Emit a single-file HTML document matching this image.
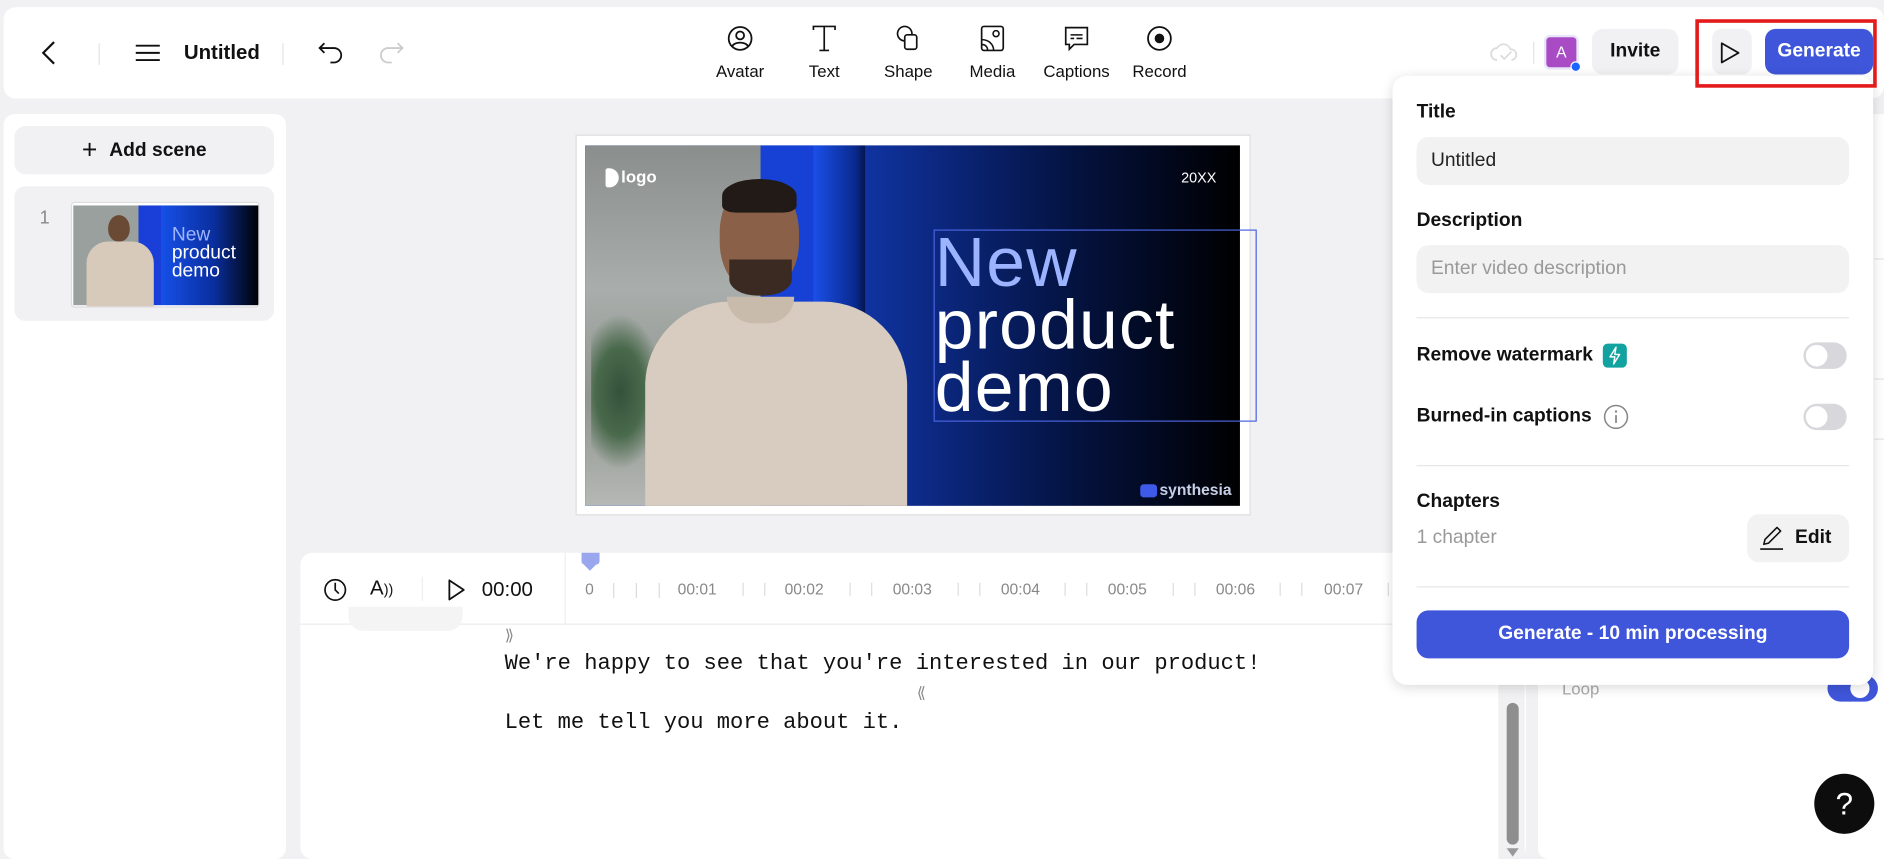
<!DOCTYPE html>
<html><head><meta charset="utf-8"><style>
*{box-sizing:border-box;margin:0;padding:0}
html,body{width:1884px;height:859px;overflow:hidden;background:#f1f1f3;font-family:"Liberation Sans",sans-serif;color:#111}
#s{position:absolute;left:0;top:0;width:1568px;height:715px;transform:scale(1.2015);transform-origin:0 0;background:#f1f1f3}
.a{position:absolute}
.tb{font-size:14px;color:#111;text-align:center}
svg{display:block}
</style></head><body><div id="s">
<!-- top bar -->
<div class="a" style="left:3px;top:6px;width:1565px;height:76px;background:#fff;border-radius:10px"></div>
<svg class="a" style="left:30px;top:32px" width="22" height="24" viewBox="0 0 22 24"><path d="M15 3 L6 12 L15 21" fill="none" stroke="#111" stroke-width="1.8"/></svg>
<div class="a" style="left:82px;top:36px;width:1px;height:18px;background:#e3e3e3"></div>
<svg class="a" style="left:112px;top:35px" width="22" height="18"><path d="M1 3H21M1 9H21M1 15H21" stroke="#111" stroke-width="1.6"/></svg>
<div class="a" style="left:153px;top:34px;font-size:17px;font-weight:bold">Untitled</div>
<div class="a" style="left:235px;top:36px;width:1px;height:18px;background:#e3e3e3"></div>
<svg class="a" style="left:264px;top:33px" width="24" height="22"><path d="M6 3 L2 7 L6 11 M2 7 H14 a6 6 0 0 1 0 12 H11" fill="none" stroke="#111" stroke-width="1.5"/></svg>
<svg class="a" style="left:313px;top:33px" width="24" height="22"><path d="M18 3 L22 7 L18 11 M22 7 H10 a6 6 0 0 0 0 12 H13" fill="none" stroke="#ccc" stroke-width="1.5"/></svg>
<!-- tools -->
<svg class="a" style="left:605px;top:21px" width="22" height="22"><circle cx="11" cy="11" r="9.5" fill="none" stroke="#111" stroke-width="1.5"/><circle cx="11" cy="8.5" r="3.3" fill="none" stroke="#111" stroke-width="1.5"/><path d="M4.5 17.5 C6 13.5 16 13.5 17.5 17.5" fill="none" stroke="#111" stroke-width="1.5"/></svg>
<div class="a tb" style="left:586px;top:51px;width:60px">Avatar</div>
<svg class="a" style="left:675px;top:20px" width="22" height="24"><path d="M2 5 V2 H20 V5 M11 2 V22 M7 22 H15" fill="none" stroke="#111" stroke-width="1.4"/></svg>
<div class="a tb" style="left:656px;top:51px;width:60px">Text</div>
<svg class="a" style="left:745px;top:20px" width="22" height="24"><circle cx="8" cy="8" r="6" fill="none" stroke="#111" stroke-width="1.4"/><rect x="8" y="9" width="10" height="12" rx="2" fill="#fff" stroke="#111" stroke-width="1.4"/></svg>
<div class="a tb" style="left:726px;top:51px;width:60px">Shape</div>
<svg class="a" style="left:815px;top:20px" width="22" height="24"><rect x="2" y="2" width="18" height="20" rx="2" fill="none" stroke="#111" stroke-width="1.4"/><circle cx="14" cy="8" r="2.5" fill="none" stroke="#111" stroke-width="1.3"/><path d="M2 13 C8 13 12 17 12 22 M2 17 C5 17 7 19 7 22" fill="none" stroke="#111" stroke-width="1.3"/></svg>
<div class="a tb" style="left:796px;top:51px;width:60px">Media</div>
<svg class="a" style="left:885px;top:21px" width="22" height="24"><path d="M2 2 H20 V16 H9 L5 20 V16 H2 Z" fill="none" stroke="#111" stroke-width="1.4"/><path d="M6 8 H16 M6 11 H9 M11 11 H16" stroke="#111" stroke-width="1.3"/></svg>
<div class="a tb" style="left:866px;top:51px;width:60px">Captions</div>
<svg class="a" style="left:954px;top:21px" width="22" height="22"><circle cx="11" cy="11" r="9.5" fill="none" stroke="#111" stroke-width="1.5"/><circle cx="11" cy="11" r="4" fill="#111"/></svg>
<div class="a tb" style="left:935px;top:51px;width:60px">Record</div>
<!-- right top -->
<svg class="a" style="left:1240px;top:34px" width="24" height="20"><path d="M6 16 a5 5 0 0 1 0-10 a6 6 0 0 1 11 1 a4.5 4.5 0 0 1 1 9" fill="none" stroke="#ddd" stroke-width="1.5"/><path d="M9 12 l3 3 l6-6" fill="none" stroke="#ddd" stroke-width="1.5"/></svg>
<div class="a" style="left:1276px;top:35px;width:1px;height:18px;background:#e3e3e3"></div>
<div class="a" style="left:1287px;top:31px;width:25px;height:25px;background:#a94bc4;border-radius:3px;color:#fff;font-size:13px;text-align:center;line-height:25px;box-shadow:0 0 0 2px #e9e6f9">A</div>
<div class="a" style="left:1307px;top:51px;width:9px;height:9px;background:#1966ff;border-radius:50%;border:1.5px solid #fff"></div>
<div class="a" style="left:1325px;top:24px;width:72px;height:38px;background:#f1f1f3;border-radius:9px;font-size:16px;font-weight:bold;text-align:center;line-height:38px">Invite</div>
<div class="a" style="left:1425px;top:24px;width:33px;height:38px;background:#f1f1f3;border-radius:8px"></div>
<svg class="a" style="left:1430px;top:34px" width="20" height="20"><path d="M3 2 L17 10 L3 18 Z" fill="none" stroke="#111" stroke-width="1.5" stroke-linejoin="round"/></svg>
<div class="a" style="left:1469px;top:24px;width:90px;height:38px;background:#3f56da;border-radius:9px;color:#fff;font-size:16px;font-weight:bold;text-align:center;line-height:38px">Generate</div>
<!-- left panel -->
<div class="a" style="left:3px;top:95px;width:235px;height:620px;background:#fff;border-radius:9px"></div>
<div class="a" style="left:12px;top:105px;width:216px;height:40px;background:#f1f1f3;border-radius:9px;font-size:16px;font-weight:bold;text-align:center;line-height:40px"><span style="font-weight:normal;font-size:22px;vertical-align:-2px;margin-right:10px">+</span>Add scene</div>
<div class="a" style="left:12px;top:155px;width:216px;height:112px;background:#f1f1f3;border-radius:9px"></div>
<div class="a" style="left:33px;top:173px;font-size:15px;color:#888">1</div>
<div class="a" style="left:59px;top:168px;width:157px;height:88px;background:#fff;border:1px solid #ddd;border-radius:3px;overflow:hidden">
 <div class="a" style="left:1px;top:2px;width:155px;height:83px;background:linear-gradient(90deg,#9aa09e 0 35%,#1a3fd8 35% 47%,#1650e8 47%,#0a2fa0 75%,#000 100%)"></div>
 <div class="a" style="left:30px;top:10px;width:18px;height:22px;background:#6a4a35;border-radius:50% 50% 45% 45%"></div>
 <div class="a" style="left:12px;top:32px;width:56px;height:55px;background:#d8cabb;border-radius:18px 18px 0 0"></div>
 <div class="a" style="left:83px;top:19px;color:#fff;font-size:16px;line-height:15px"><span style="color:#9fb4ff">New</span><br>product<br>demo</div>
</div>
<!-- canvas -->
<div class="a" style="left:479px;top:112px;width:562px;height:317px;background:#fff;border:1px solid #ddd"></div>
<div class="a" style="left:487px;top:121px;width:545px;height:300px;overflow:hidden;background:linear-gradient(90deg,#1a4ee6 0%,#123bb8 35%,#04123f 75%,#000 100%)">
 <div class="a" style="left:0;top:0;width:147px;height:300px;background:linear-gradient(180deg,#8a8e8c,#a9aeac 40%,#8f958f 70%,#b5b8b4)"></div>
 <div class="a" style="left:5px;top:140px;width:60px;height:130px;background:radial-gradient(ellipse at 40% 50%,#34513a 0,#4a6a4c 40%,rgba(120,140,120,0) 70%)"></div>
 <div class="a" style="left:146px;top:0;width:44px;height:300px;background:#1741d4"></div>
 <div class="a" style="left:190px;top:0;width:43px;height:300px;background:linear-gradient(90deg,#1a4fe8,#0a2a90 80%,#05164f)"></div>
 <div class="a" style="left:112px;top:30px;width:66px;height:92px;background:#8b6048;border-radius:46% 46% 45% 45%"></div>
 <div class="a" style="left:114px;top:28px;width:62px;height:28px;background:#221a16;border-radius:50% 50% 20% 20%"></div>
 <div class="a" style="left:120px;top:95px;width:52px;height:30px;background:#3a2a22;border-radius:0 0 45% 45%"></div>
 <div class="a" style="left:50px;top:130px;width:218px;height:190px;background:#d7ccbf;border-radius:70px 70px 0 0"></div>
 <div class="a" style="left:118px;top:126px;width:56px;height:22px;background:#c8bbac;border-radius:0 0 30px 30px"></div>
 <div class="a" style="left:17px;top:19px;width:11px;height:16px;background:#fff;border-radius:2px 8px 8px 2px"></div>
 <div class="a" style="left:30px;top:18px;color:#fff;font-size:14px;font-weight:bold">logo</div>
 <div class="a" style="left:496px;top:20px;color:#fff;font-size:12px">20XX</div>
 <div class="a" style="left:291px;top:72px;color:#fff;font-size:58px;line-height:52px;letter-spacing:1px"><span style="color:#9cb4ff">New</span><br>product<br>demo</div>
 <div class="a" style="left:462px;top:282px;width:14px;height:11px;background:#3d5ae8;border-radius:3px"></div>
 <div class="a" style="left:478px;top:279px;color:#c8d0e8;font-size:13px;font-weight:bold">synthesia</div>
</div>
<div class="a" style="left:777px;top:191px;width:269px;height:160px;border:1px solid #4a62df"></div>
<!-- timeline -->
<div class="a" style="left:250px;top:460px;width:1020px;height:255px;background:#fff;border-radius:10px"></div>
<div class="a" style="left:250px;top:519px;width:1020px;height:1px;background:#ebebeb"></div>
<div class="a" style="left:470px;top:460px;width:1px;height:59px;background:#efefef"></div>
<svg class="a" style="left:269px;top:480px" width="20" height="22"><circle cx="10" cy="11" r="8.5" fill="none" stroke="#111" stroke-width="1.4"/><path d="M10 5 V11 L13 14" fill="none" stroke="#111" stroke-width="1.4"/></svg>
<div class="a" style="left:308px;top:480px;font-size:17px">A<span style="font-size:12px">))</span></div>
<div class="a" style="left:351px;top:480px;width:1px;height:20px;background:#eee"></div>
<svg class="a" style="left:372px;top:481px" width="16" height="20"><path d="M2 2 L14 10 L2 18 Z" fill="none" stroke="#111" stroke-width="1.5" stroke-linejoin="round"/></svg>
<div class="a" style="left:401px;top:481px;font-size:17px">00:00</div>
<div class="a" style="left:484px;top:460px;width:15px;height:10px;background:#9aa6ee;border-radius:0 0 3px 3px"></div>
<div class="a" style="left:484px;top:468px;width:0;height:0;border-left:7.5px solid transparent;border-right:7.5px solid transparent;border-top:7px solid #9aa6ee"></div>
<div class="a" style="left:487px;top:483px;font-size:13px;color:#888;white-space:nowrap;word-spacing:0">
<span style="display:inline-block;width:22px">0</span><span style="color:#ddd;display:inline-block;width:19px">|</span><span style="color:#ddd;display:inline-block;width:19px">|</span><span style="color:#ddd;display:inline-block;width:18px">|</span>
</div>
<div class="a" style="left:564px;top:483px;font-size:13px;color:#888;white-space:nowrap">00:01</div>
<div class="a" style="left:653px;top:483px;font-size:13px;color:#888">00:02</div>
<div class="a" style="left:743px;top:483px;font-size:13px;color:#888">00:03</div>
<div class="a" style="left:833px;top:483px;font-size:13px;color:#888">00:04</div>
<div class="a" style="left:922px;top:483px;font-size:13px;color:#888">00:05</div>
<div class="a" style="left:1012px;top:483px;font-size:13px;color:#888">00:06</div>
<div class="a" style="left:1102px;top:483px;font-size:13px;color:#888">00:07</div>
<div class="a" style="left:618px;top:485px;width:1px;height:11px;background:#ddd;box-shadow:18px 0 #ddd,89px 0 #ddd,107px 0 #ddd,179px 0 #ddd,197px 0 #ddd,268px 0 #ddd,286px 0 #ddd,358px 0 #ddd,376px 0 #ddd,447px 0 #ddd,465px 0 #ddd,537px 0 #ddd"></div>
<div class="a" style="left:290px;top:505px;width:95px;height:20px;background:#f4f4f4;border-radius:0 0 12px 12px"></div>
<div class="a" style="left:420px;top:522px;font-family:'Liberation Mono',monospace;font-size:13px;color:#888">&#10219;</div>
<div class="a" style="left:420px;top:542px;font-family:'Liberation Mono',monospace;font-size:18.4px;color:#111;white-space:pre">We're happy to see that you're interested in our product!</div>
<div class="a" style="left:763px;top:570px;font-family:'Liberation Mono',monospace;font-size:13px;color:#888">&#10218;</div>
<div class="a" style="left:420px;top:591px;font-family:'Liberation Mono',monospace;font-size:18.4px;color:#111;white-space:pre">Let me tell you more about it.</div>
<div class="a" style="left:1247px;top:520px;width:22px;height:195px;background:#f1f1f3"></div>
<div class="a" style="left:1254px;top:585px;width:10px;height:118px;background:#8e8e8e;border-radius:5px"></div>
<div class="a" style="left:1254px;top:706px;width:0;height:0;border-left:5px solid transparent;border-right:5px solid transparent;border-top:7px solid #999"></div>
<!-- right panel -->
<div class="a" style="left:1280px;top:95px;width:288px;height:620px;background:#fff;border-radius:9px 0 0 9px"></div>
<div class="a" style="left:1560px;top:215px;width:8px;height:1px;background:#e5e5e5;box-shadow:0 100px #e5e5e5,0 150px #e5e5e5"></div>
<div class="a" style="left:1300px;top:565px;font-size:14px;color:#aaa">Loop</div>
<div class="a" style="left:1521px;top:562px;width:42px;height:22px;background:#3f56da;border-radius:11px"></div>
<div class="a" style="left:1540px;top:565px;width:16px;height:16px;background:#fff;border-radius:50%"></div>
<div class="a" style="left:1510px;top:644px;width:50px;height:50px;background:#0d0d0d;border-radius:50%;color:#fff;font-size:26px;text-align:center;line-height:50px">?</div>
<!-- popup -->
<div class="a" style="left:1159px;top:63px;width:400px;height:507px;background:#fff;border-radius:12px;box-shadow:0 2px 10px rgba(0,0,0,0.15)"></div>
<div class="a" style="left:1179px;top:85px;font-size:16px;font-weight:bold">Title</div>
<div class="a" style="left:1179px;top:114px;width:360px;height:40px;background:#f2f2f2;border-radius:10px;font-size:16px;line-height:40px;padding-left:12px;color:#222">Untitled</div>
<div class="a" style="left:1179px;top:175px;font-size:16px;font-weight:bold">Description</div>
<div class="a" style="left:1179px;top:204px;width:360px;height:40px;background:#f2f2f2;border-radius:10px;font-size:16px;line-height:40px;padding-left:12px;color:#999">Enter video description</div>
<div class="a" style="left:1179px;top:264px;width:360px;height:1px;background:#e6e6e6"></div>
<div class="a" style="left:1179px;top:287px;font-size:16px;font-weight:bold">Remove watermark</div>
<div class="a" style="left:1334px;top:286px;width:20px;height:20px;background:#12a3a1;border-radius:4px"></div>
<svg class="a" style="left:1334px;top:286px" width="20" height="20"><path d="M11 3 L6 11 H10 L9 17 L14 9 H10 Z" fill="none" stroke="#fff" stroke-width="1.2" stroke-linejoin="round"/></svg>
<div class="a" style="left:1501px;top:285px;width:36px;height:22px;background:#d8d8dc;border-radius:11px"></div>
<div class="a" style="left:1503px;top:287px;width:18px;height:18px;background:#fff;border-radius:50%"></div>
<div class="a" style="left:1179px;top:338px;font-size:16px;font-weight:bold">Burned-in captions</div>
<svg class="a" style="left:1334px;top:336px" width="22" height="22"><circle cx="11" cy="11" r="9.5" fill="none" stroke="#888" stroke-width="1.3"/><path d="M11 9.5 V16" stroke="#888" stroke-width="1.5"/><circle cx="11" cy="6.5" r="1" fill="#888"/></svg>
<div class="a" style="left:1501px;top:336px;width:36px;height:22px;background:#d8d8dc;border-radius:11px"></div>
<div class="a" style="left:1503px;top:338px;width:18px;height:18px;background:#fff;border-radius:50%"></div>
<div class="a" style="left:1179px;top:387px;width:360px;height:1px;background:#e6e6e6"></div>
<div class="a" style="left:1179px;top:409px;font-size:16px;font-weight:bold">Chapters</div>
<div class="a" style="left:1179px;top:439px;font-size:16px;color:#999">1 chapter</div>
<div class="a" style="left:1454px;top:428px;width:85px;height:40px;background:#f2f2f2;border-radius:10px"></div>
<svg class="a" style="left:1463px;top:436px" width="24" height="24"><path d="M5 17 L6 13 L16 3 L19 6 L9 16 Z" fill="none" stroke="#111" stroke-width="1.3" stroke-linejoin="round"/><path d="M2 21 H21" stroke="#111" stroke-width="1.3"/></svg>
<div class="a" style="left:1494px;top:439px;font-size:16px;font-weight:bold">Edit</div>
<div class="a" style="left:1179px;top:488px;width:360px;height:1px;background:#e6e6e6"></div>
<div class="a" style="left:1179px;top:508px;width:360px;height:40px;background:#3f56da;border-radius:10px;color:#fff;font-size:16px;font-weight:bold;text-align:center;line-height:40px">Generate - 10 min processing</div>
<!-- red highlight on top -->
<div class="a" style="left:1411px;top:16px;width:151px;height:57px;border:3px solid #e31b1b"></div>
</div></body></html>
